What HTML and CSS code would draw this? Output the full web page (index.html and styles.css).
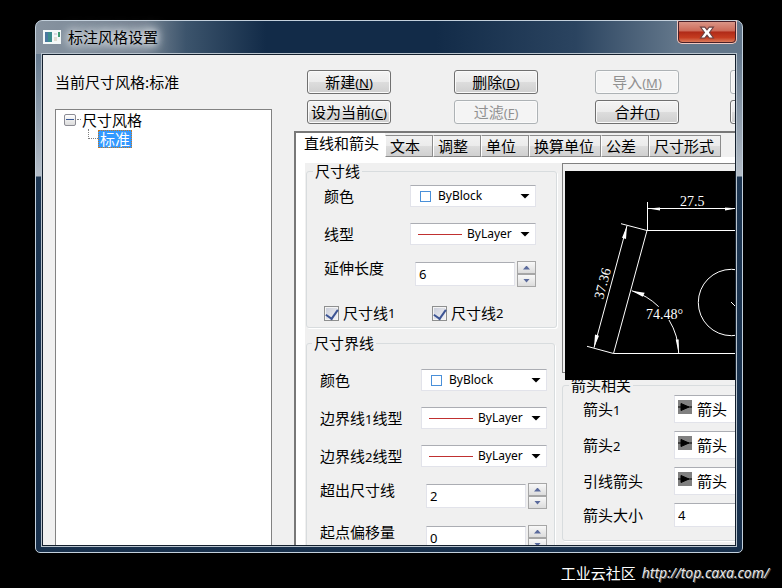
FILE: index.html
```html
<!DOCTYPE html>
<html lang="zh-CN">
<head>
    <meta charset="UTF-8">
    <meta name="viewport" content="width=device-width, initial-scale=1.0">
    <title>标注风格设置</title>
    <link rel="stylesheet" href="styles.css">
</head>
<body>
    <main class="window">
        <header class="titlebar">
            <svg class="app-icon" width="18" height="14" viewBox="0 0 18 14">
                <rect width="18" height="14" fill="#f4f8f8"/>
                <rect x="2" y="2" width="7" height="10" fill="#3c8c8c"/>
                <rect x="2" y="2" width="3" height="10" fill="#4a78a0"/>
                <rect x="11" y="3" width="3" height="2" fill="#d8d8e0"/>
                <rect x="11" y="7" width="3" height="4" fill="#e0dcd0"/>
                <rect x="15" y="2" width="2" height="5" fill="#3f9a70"/>
            </svg>
            <h1>标注风格设置</h1>
            <button class="close-btn" aria-label="关闭">
                <svg width="16" height="13" viewBox="0 0 14 12">
                    <path d="M1 1h4l2 2.500L9 1h4L9.300 6l3.700 5H9L7 8.500 5 11H1l3.700-5z" fill="#fff" stroke="#6b4040" stroke-width="1"/>
                </svg>
            </button>
        </header>

        <div class="client">
            <aside class="styles-pane">
                <p class="current">当前尺寸风格:标准</p>
                <div class="tree">
                    <div class="tree-root">
                        <button class="toggle" aria-label="折叠"></button>
                        <span class="dots"></span>
                        <span>尺寸风格</span>
                    </div>
                    <div class="tree-child">
                        <span class="elbow"></span>
                        <span class="selected">标准</span>
                    </div>
                </div>
            </aside>

            <section class="editor">
                <div class="actions">
                    <button>新建<small>(<u>N</u>)</small></button>
                    <button>删除<small>(<u>D</u>)</small></button>
                    <button disabled>导入<small>(<u>M</u>)</small></button>
                    <button disabled aria-label="导出"></button>
                    <button>设为当前<small>(<u>C</u>)</small></button>
                    <button disabled>过滤<small>(<u>F</u>)</small></button>
                    <button>合并<small>(<u>T</u>)</small></button>
                    <button aria-label="替换"></button>
                </div>

                <div class="tab-control">
                    <nav class="tabs">
                        <button class="active">直线和箭头</button>
                        <button>文本</button>
                        <button>调整</button>
                        <button>单位</button>
                        <button>换算单位</button>
                        <button>公差</button>
                        <button>尺寸形式</button>
                    </nav>

                    <div class="page">
                        <div class="column">
                            <fieldset class="dim-line">
                                <legend>尺寸线</legend>
                                <div class="row">
                                    <label for="dim-color">颜色</label>
                                    <div class="combo">
                                        <span class="swatch"></span>
                                        <select id="dim-color"><option>ByBlock</option></select>
                                        <span class="arrow"></span>
                                    </div>
                                </div>
                                <div class="row">
                                    <label for="dim-type">线型</label>
                                    <div class="combo">
                                        <span class="line"></span>
                                        <select id="dim-type"><option>ByLayer</option></select>
                                        <span class="arrow"></span>
                                    </div>
                                </div>
                                <div class="row spin-row">
                                    <label for="dim-ext">延伸长度</label>
                                    <div class="spinner">
                                        <input type="text" id="dim-ext" value="6">
                                        <div class="spin-btns">
                                            <button class="up" aria-label="增加"></button>
                                            <button class="down" aria-label="减少"></button>
                                        </div>
                                    </div>
                                </div>
                                <div class="checks">
                                    <label><input type="checkbox" checked>尺寸线<small>1</small></label>
                                    <label><input type="checkbox" checked>尺寸线<small>2</small></label>
                                </div>
                            </fieldset>

                            <fieldset class="ext-line">
                                <legend>尺寸界线</legend>
                                <div class="row">
                                    <label for="ext-color">颜色</label>
                                    <div class="combo">
                                        <span class="swatch"></span>
                                        <select id="ext-color"><option>ByBlock</option></select>
                                        <span class="arrow"></span>
                                    </div>
                                </div>
                                <div class="row">
                                    <label for="ext-type1">边界线<small>1</small>线型</label>
                                    <div class="combo">
                                        <span class="line"></span>
                                        <select id="ext-type1"><option>ByLayer</option></select>
                                        <span class="arrow"></span>
                                    </div>
                                </div>
                                <div class="row">
                                    <label for="ext-type2">边界线<small>2</small>线型</label>
                                    <div class="combo">
                                        <span class="line"></span>
                                        <select id="ext-type2"><option>ByLayer</option></select>
                                        <span class="arrow"></span>
                                    </div>
                                </div>
                                <div class="row spin-row">
                                    <label for="ext-over">超出尺寸线</label>
                                    <div class="spinner">
                                        <input type="text" id="ext-over" value="2">
                                        <div class="spin-btns">
                                            <button class="up" aria-label="增加"></button>
                                            <button class="down" aria-label="减少"></button>
                                        </div>
                                    </div>
                                </div>
                                <div class="row spin-row">
                                    <label for="ext-offset">起点偏移量</label>
                                    <div class="spinner">
                                        <input type="text" id="ext-offset" value="0">
                                        <div class="spin-btns">
                                            <button class="up" aria-label="增加"></button>
                                            <button class="down" aria-label="减少"></button>
                                        </div>
                                    </div>
                                </div>
                            </fieldset>
                        </div>

                        <div class="column wide">
                            <div class="preview">
                                <svg width="250" height="209" viewBox="0 0 250 209">
                                    <rect width="250" height="209" fill="#000"/>
                                    <g fill="none" stroke="#fff" stroke-width="1">
                                        <!-- outline -->
                                        <path d="M250 59.500H82L48.500 182.500H250"/>
                                        <circle cx="166.500" cy="131.500" r="33.200"/>
                                        <path d="M166 131l5 5"/>
                                        <!-- top dimension -->
                                        <path d="M82.500 31v28M82 37.500h168"/>
                                        <!-- slanted dimension -->
                                        <path d="M56 52.700l26 6.800M22 175.300l26.500 7.200M62 54.700L29 176.700"/>
                                        <!-- angle -->
                                        <path d="M66.700 119.700A65.300 65.300 0 0 1 93.700 135.700M104 149A65.300 65.300 0 0 1 113.700 182.500"/>
                                    </g>
                                    <g fill="#fff">
                                        <path d="M83 37.500l12-1v3zM172 37.500l-12-1v3z"/>
                                        <path d="M62 54.700l-5 12 4 1.200zM29 176.700l5-12-4-1.200z"/>
                                        <path d="M66.700 119.700l13 2-2 4zM113.700 182.500l-3-14h3z"/>
                                    </g>
                                    <g class="dim-text">
                                        <text x="115" y="35">27.5</text>
                                        <text x="81" y="148">74.48°</text>
                                        <text transform="translate(38 129) rotate(-75)">37.36</text>
                                    </g>
                                </svg>
                            </div>

                            <fieldset class="arrows">
                                <legend>箭头相关</legend>
                                <div class="row">
                                    <label for="arrow1">箭头<small>1</small></label>
                                    <div class="combo">
                                        <svg class="head" width="14" height="14" viewBox="0 0 14 14"><rect width="14" height="14" fill="#808080"/><path d="M0 7h14M3 3.500v7L11 7z" fill="#000" stroke="#000"/></svg>
                                        <select id="arrow1"><option>箭头</option></select>
                                    </div>
                                </div>
                                <div class="row">
                                    <label for="arrow2">箭头<small>2</small></label>
                                    <div class="combo">
                                        <svg class="head" width="14" height="14" viewBox="0 0 14 14"><rect width="14" height="14" fill="#808080"/><path d="M0 7h14M3 3.500v7L11 7z" fill="#000" stroke="#000"/></svg>
                                        <select id="arrow2"><option>箭头</option></select>
                                    </div>
                                </div>
                                <div class="row">
                                    <label for="leader">引线箭头</label>
                                    <div class="combo">
                                        <svg class="head" width="14" height="14" viewBox="0 0 14 14"><rect width="14" height="14" fill="#808080"/><path d="M0 7h14M3 3.500v7L11 7z" fill="#000" stroke="#000"/></svg>
                                        <select id="leader"><option>箭头</option></select>
                                    </div>
                                </div>
                                <div class="row">
                                    <label for="arrow-size">箭头大小</label>
                                    <input type="text" id="arrow-size" value="4">
                                </div>
                            </fieldset>
                        </div>
                    </div>
                </div>
            </section>
        </div>
    </main>

    <footer class="credit">
        <span>工业云社区</span>
        <a href="http://top.caxa.com/">http://top.caxa.com/</a>
    </footer>
</body>
</html>
```

FILE: styles.css
```css
* {
    margin: 0;
    padding: 0;
    box-sizing: border-box;
}

body {
    display: flex;
    flex-direction: column;
    height: 100vh;
    padding: 20px 39px 0 35px;
    background: #000;
    color: #000;
    font: 15px/18px "Noto Sans CJK SC", sans-serif;
    overflow: hidden;
}

button, select, input {
    font: inherit;
    color: inherit;
}

small, select, input {
    font-family: "Noto Sans", "Noto Sans CJK SC", sans-serif;
    font-size: 13px;
}

/* window frame */
.window {
    flex: 1;
    min-height: 0;
    display: flex;
    flex-direction: column;
    padding: 0 5px 5px;
    border: 1px solid #c3d0dc;
    border-radius: 7px 7px 5px 5px;
    background:
        linear-gradient(90deg, #8793a0 0, #748291 110px, #3c546c 150px, #122b48 230px, #122b48 400px, #2b4460 540px, #62768a 640px, #62768a 100%) top / 100% 33px no-repeat,
        linear-gradient(#64788c 33px, #b4bdc7 155px, #1d3652 156px, #18304c 100%);
}

.titlebar {
    display: flex;
    align-items: center;
    height: 32px;
    padding-left: 2px;
}

.titlebar h1 {
    margin-left: 7px;
    font-size: 15px;
    font-weight: 400;
    text-shadow: 0 0 8px #fff, 0 0 10px #dde4ea, 0 0 14px #dde4ea;
}

.close-btn {
    display: flex;
    align-items: center;
    justify-content: center;
    align-self: flex-start;
    width: 60px;
    height: 24px;
    margin: -1px 0 0 auto;
    border: 1px solid #f0c8c0;
    border-top-color: #c8d0d8;
    border-radius: 0 0 5px 5px;
    outline: 1px solid #4a2028;
    outline-offset: -2px;
    background: linear-gradient(#dc9a8c, #cc6a58 45%, #b02a18 50%, #c43c20 75%, #e08868);
}

.client {
    flex: 1;
    min-height: 0;
    display: flex;
    border: 1px solid #b9c4ce;
    outline: 1px solid #14202e;
    outline-offset: -2px;
    padding: 1px;
    background: #f0f0f0;
    background-clip: content-box;
    overflow: hidden;
}

/* style tree */
.styles-pane {
    flex: 0 0 250px;
    display: flex;
    flex-direction: column;
    padding: 18px 21px 0 12px;
}

.current {
    margin-bottom: 18px;
}

.tree {
    flex: 1;
    padding: 0 8px;
    border: 1px solid #828282;
    border-bottom: 0;
    background: #fff;
}

.tree-root, .tree-child {
    display: flex;
    align-items: center;
    height: 19px;
}

.toggle {
    width: 12px;
    height: 12px;
    border: 1px solid #8c8c94;
    border-radius: 2px;
    background: linear-gradient(#3b5a96, #3b5a96) center / 8px 1px no-repeat, linear-gradient(#fff, #dcdcdc);
}

.dots {
    width: 4px;
    margin: 0 1px;
    border-top: 1px dotted #808080;
}

.tree-child {
    padding-left: 24px;
}

.elbow {
    align-self: flex-start;
    width: 10px;
    height: 10px;
    border: 1px dotted #808080;
    border-width: 0 0 1px 1px;
}

.selected {
    padding: 0 1px;
    border: 1px dotted #c87820;
    background: #3399ff;
    color: #fff;
    line-height: 16px;
}

/* top buttons */
.editor {
    flex: 1;
    min-width: 0;
    display: flex;
    flex-direction: column;
    padding-top: 15px;
    overflow: hidden;
}

.actions {
    display: grid;
    grid-template-columns: 147px 141px 135px 84px;
    row-gap: 6px;
    margin: 0 0 7px 14px;
}

.actions button {
    width: 84px;
    height: 24px;
    border: 1px solid #707070;
    border-radius: 3px;
    background: linear-gradient(#f4f4f4, #ebebeb 50%, #dddddd 50%, #cfcfcf);
    box-shadow: inset 0 0 0 1px #fafafa;
    line-height: 20px;
    white-space: nowrap;
}

.actions button:disabled {
    border-color: #adb2b5;
    background: #f4f4f4;
    color: #909090;
}

/* tabs */
.tab-control {
    flex: 1;
    margin-left: 1px;
    border: 2px solid #787878;
    border-width: 2px 0 0 2px;
    background: #fff;
}

.tabs {
    display: flex;
    align-items: flex-end;
    height: 24px;
    background: #f0f0f0;
}

.tabs button {
    height: 22px;
    min-width: 48px;
    padding: 0 6px 0 4px;
    border: 1px solid #8c8c8c;
    border-left-color: #fff;
    background: linear-gradient(#f2f2f2, #ebebeb 50%, #dddddd 50%, #d0d0d0);
    line-height: 18px;
    text-align: left;
    white-space: nowrap;
}

.tabs .active {
    height: 24px;
    padding: 0 6px 4px 8px;
    border: 0;
    background: #fff;
}

.page {
    display: flex;
    gap: 5px;
    margin: 6px 0 0 9px;
    background: #f0f0f0;
}

.column {
    flex: 0 0 252px;
    padding-left: 1px;
}

.wide {
    flex: 1 0 240px;
    padding-left: 0;
}

fieldset {
    min-width: 0;
    border: 1px solid #d8dcde;
    border-radius: 3px;
    box-shadow: 1px 1px 0 #fff;
}

legend {
    margin-left: -8px;
    padding: 0 2px;
    line-height: 16px;
}

.row {
    display: flex;
    align-items: center;
    justify-content: space-between;
}

.spin-row label {
    align-self: flex-start;
    margin-top: -2px;
}

.dim-line {
    height: 165px;
    padding: 6px 20px 0 17px;
}

.dim-line legend {
    margin-left: -11px;
}

.dim-line .row {
    margin-bottom: 16px;
}

.ext-line {
    height: 240px;
    margin: 7px 2px 0 0;
    padding: 18px 7px 0 13px;
}

.ext-line .row {
    margin-bottom: 16px;
}

/* combo boxes */
.combo {
    display: flex;
    align-items: center;
    width: 126px;
    height: 22px;
    border: 1px solid #e2e3ea;
    border-top-color: #abadb3;
    background: #fff;
}

.combo select {
    flex: 1;
    min-width: 0;
    border: 0;
    background: none;
    appearance: none;
    font-size: 12px;
    line-height: 18px;
}

.swatch {
    width: 11px;
    height: 11px;
    margin: 0 7px 0 9px;
    border: 1px solid #4a90d9;
}

.line {
    width: 44px;
    height: 1px;
    margin: 0 5px 0 7px;
    background: #c03030;
}

.arrow {
    width: 10px;
    height: 5px;
    margin-right: 5px;
    background: #000;
    clip-path: polygon(0 0, 100% 0, 50% 100%);
}

/* number boxes */
.spinner {
    display: flex;
    align-items: center;
    gap: 2px;
}

input[type="text"] {
    width: 100px;
    height: 24px;
    padding-left: 3px;
    border: 1px solid #e2e3ea;
    border-top-color: #abadb3;
    background: #fff;
}

.spin-btns {
    display: flex;
    flex-direction: column;
}

.spin-btns button {
    width: 19px;
    height: 13px;
    border: 1px solid #a6a6a6;
    background: linear-gradient(#f8f8f8, #dcdcdc);
}

.spin-btns button::after {
    content: "";
    display: block;
    width: 7px;
    height: 4px;
    margin: 0 auto;
    background: #5a6a9c;
    clip-path: polygon(0 100%, 50% 0, 100% 100%);
}

.spin-btns .down::after {
    clip-path: polygon(0 0, 100% 0, 50% 100%);
}

/* check boxes */
.checks {
    display: grid;
    grid-template-columns: 108px 1fr;
    margin-top: 17px;
}

.checks label {
    display: flex;
    align-items: center;
}

.checks input {
    width: 15px;
    height: 15px;
    margin-right: 4px;
    border: 1px solid #8e8f8f;
    background: linear-gradient(135deg, #c8ccd8, #f4f4f8);
    box-shadow: inset 0 0 0 1px #f4f4f4;
    appearance: none;
}

.checks input:checked::after {
    content: "";
    display: block;
    width: 6px;
    height: 10px;
    margin: 0 auto;
    border: solid #3c5494;
    border-width: 0 2px 2px 0;
    transform: rotate(35deg);
}

/* drawing preview, its bottom edge covers the group title below */
.preview {
    position: relative;
    z-index: 1;
    height: 210px;
    padding: 7px 0 0 2px;
    border: 1px solid #808080;
}

.preview svg {
    display: block;
}

.dim-text {
    fill: #fff;
    font-family: "Liberation Serif", serif;
    font-size: 14px;
}

.arrows {
    height: 164px;
    margin-top: 4px;
    padding: 2px 0 0 20px;
}

.arrows legend {
    margin-left: -14px;
}

.arrows .row {
    justify-content: flex-start;
    margin-bottom: 8px;
}

.arrows label {
    flex: 0 0 91px;
}

.arrows .combo {
    height: 28px;
}

.arrows select {
    font-family: "Noto Sans CJK SC", sans-serif;
    font-size: 15px;
}

.head {
    margin: 0 5px 4px 3px;
}

/* credit line */
.credit {
    display: flex;
    align-items: center;
    justify-content: flex-end;
    gap: 6px;
    height: 35px;
    margin-right: -26px;
    padding-top: 4px;
    color: #fff;
}

.credit a {
    color: #e8e8e8;
    font: italic 14px/18px "Noto Sans", sans-serif;
    text-decoration: none;
    text-shadow: 1px 1px 0 #555;
}
```
